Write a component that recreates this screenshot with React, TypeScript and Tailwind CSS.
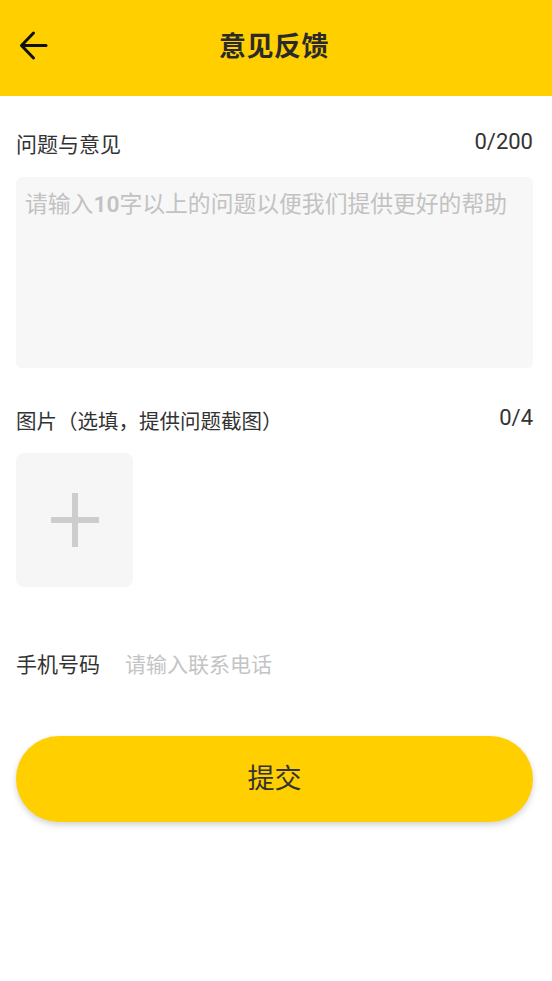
import React from "react";

export default function App() {
  const font = { fontFamily: 'Roboto, "Noto Sans CJK SC", sans-serif' };
  return (
    <div className="w-[552px] min-h-[981px] bg-white text-[#333]" style={font}>
      <header className="relative h-[96px] bg-[#FFCF00] flex items-center justify-center">
        <svg
          className="absolute left-[19px] top-[30px]"
          width="30"
          height="31"
          viewBox="0 0 30 31"
          fill="none"
          stroke="#111"
          strokeWidth="3"
          strokeLinecap="round"
          strokeLinejoin="round"
        >
          <path d="M3 15.5H27" />
          <path d="M14.5 3L2.5 15.5L14.5 28" />
        </svg>
        <h1 className="text-[27px] font-bold leading-none text-[#2a2a2a] tracking-[0.5px] mt-[-2px] mr-[4px]">意见反馈</h1>
      </header>

      <main className="pl-[16px] pr-[19px] pt-[35px] flex flex-col">
        <div className="flex items-center justify-between h-[28px]">
          <span className="text-[21px] leading-[28px]">问题与意见</span>
          <span className="text-[22px] leading-[28px] mt-[-6px]">0/200</span>
        </div>

        <div className="mt-[18px] h-[191px] rounded-[6px] bg-[#f7f7f7] pl-[9px] pt-[13px]">
          <p className="text-[22.8px] leading-[30px] text-[#c2c2c2] whitespace-nowrap">
            请输入<span className="font-semibold">10</span>字以上的问题以便我们提供更好的帮助
          </p>
        </div>

        <div className="mt-[40px] flex items-center justify-between h-[28px]">
          <span className="text-[20.5px] leading-[28px]">图片（选填，提供问题截图）</span>
          <span className="text-[22px] leading-[28px] mt-[-8px]">0/4</span>
        </div>

        <div className="mt-[17px] w-[117px] h-[134px] rounded-[8px] bg-[#f6f6f6] flex items-center justify-center">
          <svg width="48" height="54" viewBox="0 0 48 54">
            <rect x="0" y="24" width="48" height="6" fill="#cdcdcd" />
            <rect x="21" y="0" width="6" height="54" fill="#cdcdcd" />
          </svg>
        </div>

        <div className="mt-[64px] flex items-center h-[28px]">
          <span className="text-[21px] leading-[28px] w-[109px]">手机号码</span>
          <span className="text-[21px] leading-[28px] text-[#c4c4c4]">请输入联系电话</span>
        </div>

        <button className="mt-[57px] h-[86px] w-full rounded-full bg-[#FFCF00] shadow-[0_3px_6px_rgba(0,0,0,0.18)] flex items-center justify-center">
          <span className="text-[27px] leading-none text-[#333]">提交</span>
        </button>
      </main>
    </div>
  );
}
